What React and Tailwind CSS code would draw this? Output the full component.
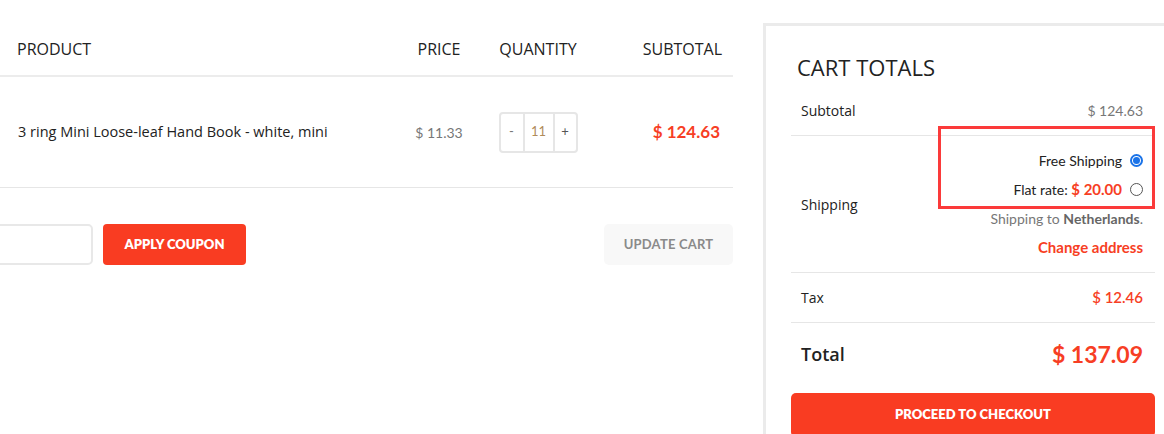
const RED = 'text-[#f73e24]';

function QtyBox({ value }) {
  return (
    <div className="flex h-[41px] w-[79px] overflow-hidden rounded-[4px] border-2 border-[#e6e6e6] font-['Lato'] text-[13px]">
      <span className="flex w-[22px] items-center justify-center text-[#777]">-</span>
      <span className="flex w-[32px] items-center justify-center border-x-2 border-[#e6e6e6] text-[#b08b5a]">{value}</span>
      <span className="flex flex-1 items-center justify-center text-[#555]">+</span>
    </div>
  );
}

function CartTable() {
  return (
    <div className="w-[733px] shrink-0">
      <div className="flex h-[54px] items-center border-b-2 border-[#ececec] font-['Open_Sans'] text-[16px] text-[#222]">
        <div className="flex-1 pl-[17px]">PRODUCT</div>
        <div className="w-[78px] text-center">PRICE</div>
        <div className="w-[120px] text-center">QUANTITY</div>
        <div className="w-[135px] pr-[11px] text-right">SUBTOTAL</div>
      </div>
      <div className="flex h-[111px] items-center border-b border-[#e6e6e6]">
        <div className="flex-1 pl-[18px] font-['Open_Sans'] text-[14.5px] text-[#222]">3 ring Mini Loose-leaf Hand Book - white, mini</div>
        <div className="w-[78px] text-center font-['Lato'] text-[14px] text-[#777]">$ 11.33</div>
        <div className="flex w-[120px] justify-center">
          <QtyBox value="11" />
        </div>
        <div className={`w-[135px] pr-[13px] text-right font-['Lato'] text-[17px] font-bold ${RED}`}>$ 124.63</div>
      </div>
      <div className="mt-[36px] flex items-center">
        <input className="-ml-[97px] h-[41px] w-[190px] rounded-[5px] border-2 border-[#e8e8e8] outline-none" />
        <button className="ml-[10px] h-[41px] w-[143px] rounded-[4px] bg-[#f93c22] font-['Lato'] text-[13px] font-extrabold text-white">
          APPLY COUPON
        </button>
        <button className="ml-auto h-[41px] w-[129px] rounded-[5px] bg-[#f8f8f8] font-['Lato'] text-[13px] font-bold tracking-[0.2px] text-[#8a8a8a]">
          UPDATE CART
        </button>
      </div>
    </div>
  );
}

function Radio({ checked }) {
  return checked ? (
    <span className="flex h-[13px] w-[13px] items-center justify-center rounded-full border-2 border-[#1a73e8]">
      <span className="h-[7px] w-[7px] rounded-full bg-[#1a73e8]" />
    </span>
  ) : (
    <span className="h-[13px] w-[13px] rounded-full border border-[#555]" />
  );
}

function CartTotals() {
  return (
    <div className="w-[420px] shrink-0 border-[3px] border-b-0 border-[#ebebeb] px-[25px] pt-[26px]">
      <h2 className="pl-[6px] font-['Open_Sans'] text-[22px] leading-[30px] text-[#222]">CART TOTALS</h2>
      <div className="mt-[3px] flex h-[51px] items-center justify-between border-b border-[#e6e6e6] px-[10px]">
        <span className="font-['Open_Sans'] text-[14px] text-[#222]">Subtotal</span>
        <span className="pr-[2px] font-['Lato'] text-[14px] text-[#777]">$ 124.63</span>
      </div>
      <div className="relative flex items-center justify-between border-b border-[#e6e6e6] px-[10px] py-[10px]">
        <span className="font-['Open_Sans'] text-[14px] text-[#222]">Shipping</span>
        <div className="flex flex-col items-end pr-[2px] font-['Lato'] text-[14px]">
          <div className="flex h-[29px] items-center gap-[8px] text-[#222]">
            Free Shipping <Radio checked />
          </div>
          <div className="flex h-[29px] items-center gap-[8px] text-[#222]">
            <span>
              Flat rate: <span className={`text-[15px] font-bold ${RED}`}>$ 20.00</span>
            </span>
            <Radio />
          </div>
          <div className="flex h-[29px] items-center text-[#777]">
            <span>
              Shipping to <b className="text-[#666]">Netherlands</b>.
            </span>
          </div>
          <div className={`flex h-[29px] items-center text-[15px] font-bold ${RED}`}>Change address</div>
        </div>
        <div className="absolute right-0 top-[-10px] h-[83px] w-[217px] border-[3px] border-[#fb3a3a]" />
      </div>
      <div className="flex h-[50px] items-center justify-between border-b border-[#e6e6e6] px-[10px]">
        <span className="font-['Open_Sans'] text-[14px] text-[#222]">Tax</span>
        <span className={`pr-[2px] font-['Lato'] text-[15px] font-semibold ${RED}`}>$ 12.46</span>
      </div>
      <div className="flex h-[62px] items-center justify-between px-[10px]">
        <span className="font-['Open_Sans'] text-[18px] font-semibold text-[#222]">Total</span>
        <span className={`pr-[2px] font-['Lato'] text-[23px] font-bold ${RED}`}>$ 137.09</span>
      </div>
      <button className="mt-[8px] h-[44px] w-full rounded-[5px] bg-[#f93c22] font-['Lato'] text-[13px] font-extrabold text-white">
        PROCEED TO CHECKOUT
      </button>
    </div>
  );
}

export default function App() {
  return (
    <div className="flex h-[434px] w-[1164px] gap-[30px] overflow-hidden bg-white pt-[23px]">
      <CartTable />
      <CartTotals />
    </div>
  );
}
